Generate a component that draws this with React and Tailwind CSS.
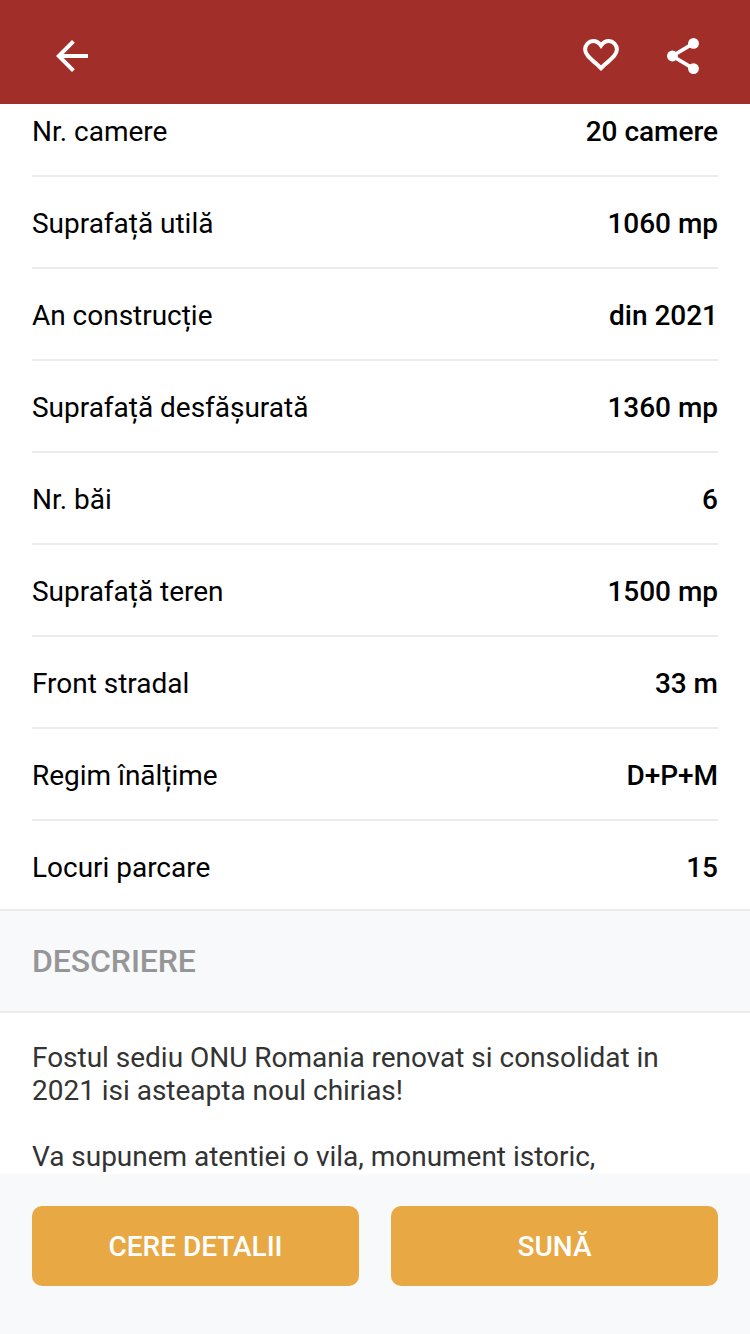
import React from 'react';
import { MdArrowBack } from 'react-icons/md';

const details = [
    { label: 'Nr. camere', value: '20 camere' },
    { label: 'Suprafață utilă', value: '1060 mp' },
    { label: 'An construcție', value: 'din 2021' },
    { label: 'Suprafață desfășurată', value: '1360 mp' },
    { label: 'Nr. băi', value: '6' },
    { label: 'Suprafață teren', value: '1500 mp' },
    { label: 'Front stradal', value: '33 m' },
    { label: 'Regim înālțime', value: 'D+P+M' },
    { label: 'Locuri parcare', value: '15' },
];

const HeartIcon = () => (
    <svg className="w-9 h-[34px]" viewBox="0 0 36 34" fill="none" stroke="currentColor" strokeWidth="4">
        <path d="M18 29.2L16 27.3C7 19.2 2.1 15.5 2.1 10.6C2.1 5.8 5.7 2.1 10.3 2.1C13.2 2.1 16 3.9 18 6.6C20 3.9 22.8 2.1 25.7 2.1C30.3 2.1 33.9 5.8 33.9 10.6C33.9 15.5 29 19.2 20 27.3Z" />
    </svg>
);

const ShareIcon = () => (
    <svg className="w-8 h-9" viewBox="0 0 32 36" fill="currentColor">
        <path d="M26.5 5.4L5.4 18L26.5 30.6" fill="none" stroke="currentColor" strokeWidth="3.7" />
        <circle cx="5.4" cy="18" r="5.4" />
        <circle cx="26.5" cy="5.4" r="5.4" />
        <circle cx="26.5" cy="30.6" r="5.4" />
    </svg>
);

const Header = () => (
    <header className="h-[104px] shrink-0 bg-[#a22e2a] text-white flex items-center justify-between pt-2 pl-12 pr-[51px]">
        <button aria-label="Înapoi"><MdArrowBack className="size-12" /></button>
        <div className="flex items-center gap-12">
            <button aria-label="Favorite"><HeartIcon /></button>
            <button aria-label="Distribuie"><ShareIcon /></button>
        </div>
    </header>
);

const DetailRow = ({ label, value }) => (
    <div className="h-[92px] pt-[30px] flex justify-between border-b-2 border-[#ebebeb] last:border-b-0 last:h-[86px] first:h-[73px] first:pt-[11px]">
        <span>{label}</span>
        <span className="font-medium">{value}</span>
    </div>
);

const App = () => {
    return (
        <div className="w-[750px] h-[1334px] bg-white flex flex-col overflow-hidden font-['Roboto',sans-serif] text-[28px] leading-[33px] tracking-[-0.02px] text-black">
            <Header />
            <main className="flex-1 min-h-0 overflow-hidden">
                <div className="px-8 h-[805px]">
                    {details.map((item) => (
                        <DetailRow key={item.label} label={item.label} value={item.value} />
                    ))}
                </div>
                <div className="h-[104px] px-8 bg-[#f8f9fb] border-y-2 border-[#ebebeb] flex items-center">
                    <h2 className="text-[32px] font-medium tracking-[-0.1px] text-[#969696]">DESCRIERE</h2>
                </div>
                <div className="px-8 pt-[28px] text-[#333333]">
                    <p>Fostul sediu ONU Romania renovat si consolidat in<br />2021 isi asteapta noul chirias!</p>
                    <p className="mt-[33px]">Va supunem atentiei o vila, monument istoric,</p>
                </div>
            </main>
            <footer className="h-40 shrink-0 bg-[#f8f9fb] px-8 pt-8 flex gap-8">
                <button className="flex-1 h-20 rounded-[10px] bg-[#e8a945] text-white font-medium">CERE DETALII</button>
                <button className="flex-1 h-20 rounded-[10px] bg-[#e8a945] text-white font-medium">SUNĂ</button>
            </footer>
        </div>
    );
};

export default App;
